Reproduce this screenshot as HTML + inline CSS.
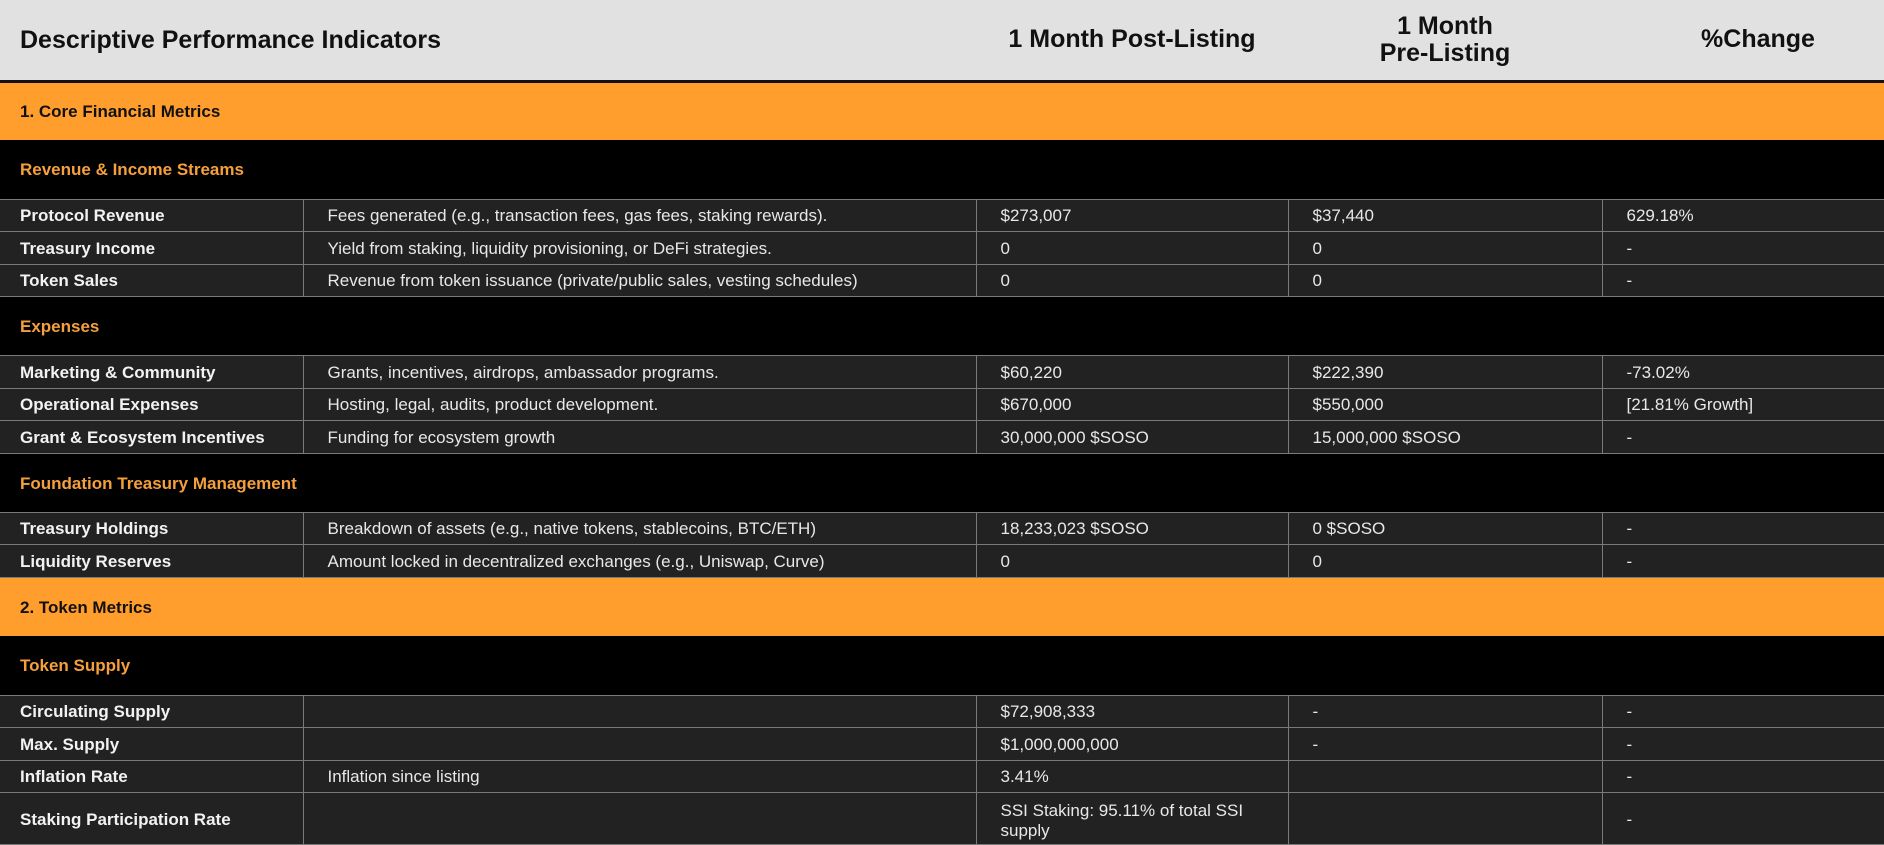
<!DOCTYPE html>
<html><head><meta charset="utf-8"><style>
*{margin:0;padding:0;box-sizing:border-box}
body{width:1884px;height:844px;overflow:hidden;background:#222;font-family:"Liberation Sans",sans-serif}
table{border-collapse:collapse;table-layout:fixed;width:1884px}
td{padding:2px 0 0 20px;font-size:17px;color:#e8e8e8;white-space:nowrap;vertical-align:middle}
td.c{padding-left:24px}
tr.hd td{background:#e1e1e1;color:#111;font-weight:bold;font-size:25px;height:81px;border-bottom:3px solid #111;line-height:27px}
tr.or td{background:#ff9d2d;color:#111;font-weight:bold;font-size:17px;height:59px}
tr.bk td{background:#000;color:#f5a03c;font-weight:bold;font-size:17px;height:59px}
tr.r td{background:#222;border:1px solid #7a7a7a;border-left:none;height:32.5px}
tr.r td:last-child{border-right:none}
tr.r td:first-child{font-weight:bold;color:#f2f2f2}
</style></head><body>
<table>
<colgroup><col style="width:303px"><col style="width:673px"><col style="width:312px"><col style="width:314px"><col style="width:282px"></colgroup>
<tr class="hd"><td colspan="2">Descriptive Performance Indicators</td><td style="text-align:center;padding:0">1 Month Post-Listing</td><td style="text-align:center;padding:0">1 Month<br>Pre-Listing</td><td style="text-align:center;padding:0 0 0 30px">%Change</td></tr>
<tr class="or"><td colspan="5">1. Core Financial Metrics</td></tr>
<tr class="bk"><td colspan="5">Revenue &amp; Income Streams</td></tr>
<tr class="r"><td>Protocol Revenue</td><td class="c">Fees generated (e.g., transaction fees, gas fees, staking rewards).</td><td class="c">$273,007</td><td class="c">$37,440</td><td class="c">629.18%</td></tr>
<tr class="r"><td>Treasury Income</td><td class="c">Yield from staking, liquidity provisioning, or DeFi strategies.</td><td class="c">0</td><td class="c">0</td><td class="c">-</td></tr>
<tr class="r"><td>Token Sales</td><td class="c">Revenue from token issuance (private/public sales, vesting schedules)</td><td class="c">0</td><td class="c">0</td><td class="c">-</td></tr>
<tr class="bk"><td colspan="5">Expenses</td></tr>
<tr class="r"><td>Marketing &amp; Community</td><td class="c">Grants, incentives, airdrops, ambassador programs.</td><td class="c">$60,220</td><td class="c">$222,390</td><td class="c">-73.02%</td></tr>
<tr class="r"><td>Operational Expenses</td><td class="c">Hosting, legal, audits, product development.</td><td class="c">$670,000</td><td class="c">$550,000</td><td class="c">[21.81% Growth]</td></tr>
<tr class="r"><td>Grant &amp; Ecosystem Incentives</td><td class="c">Funding for ecosystem growth</td><td class="c">30,000,000 $SOSO</td><td class="c">15,000,000 $SOSO</td><td class="c">-</td></tr>
<tr class="bk"><td colspan="5">Foundation Treasury Management</td></tr>
<tr class="r"><td>Treasury Holdings</td><td class="c">Breakdown of assets (e.g., native tokens, stablecoins, BTC/ETH)</td><td class="c">18,233,023 $SOSO</td><td class="c">0 $SOSO</td><td class="c">-</td></tr>
<tr class="r"><td>Liquidity Reserves</td><td class="c">Amount locked in decentralized exchanges (e.g., Uniswap, Curve)</td><td class="c">0</td><td class="c">0</td><td class="c">-</td></tr>
<tr class="or"><td colspan="5">2. Token Metrics</td></tr>
<tr class="bk"><td colspan="5">Token Supply</td></tr>
<tr class="r"><td>Circulating Supply</td><td class="c"></td><td class="c">$72,908,333</td><td class="c">-</td><td class="c">-</td></tr>
<tr class="r"><td>Max. Supply</td><td class="c"></td><td class="c">$1,000,000,000</td><td class="c">-</td><td class="c">-</td></tr>
<tr class="r"><td>Inflation Rate</td><td class="c">Inflation since listing</td><td class="c">3.41%</td><td class="c"></td><td class="c">-</td></tr>
<tr class="r"><td style="height:52px">Staking Participation Rate</td><td class="c"></td><td class="c" style="white-space:normal;line-height:20px;padding:4px 40px 0 24px">SSI Staking: 95.11% of total SSI supply</td><td class="c"></td><td class="c">-</td></tr>
</table>
</body></html>
